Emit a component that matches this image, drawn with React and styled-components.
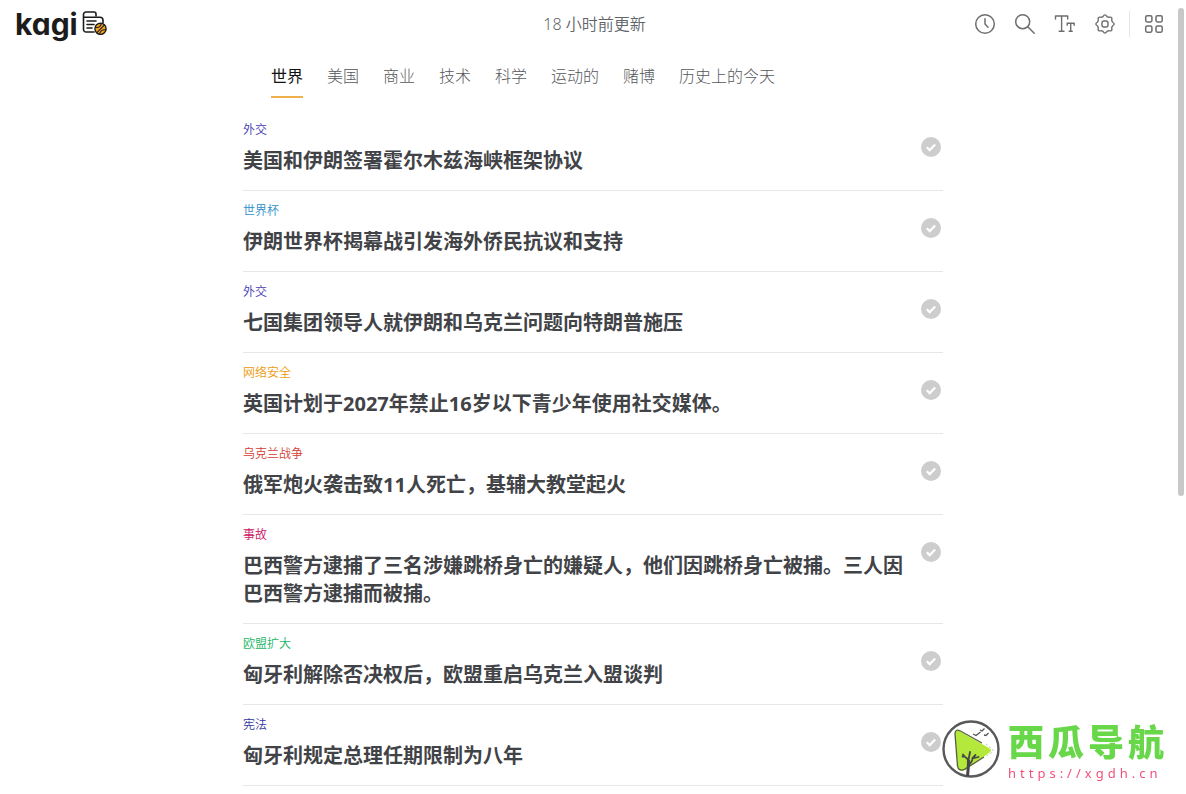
import React, { useState } from 'react'
import styled, { createGlobalStyle } from 'styled-components'

const GlobalStyle = createGlobalStyle`
  * {
    box-sizing: border-box;
  }
  body {
    margin: 0;
    background: #fff;
    color: #3f4145;
    font-family: "Noto Sans", "Noto Sans CJK SC", sans-serif;
  }
  button {
    border: 0;
    padding: 0;
    background: none;
    font: inherit;
    color: inherit;
    cursor: pointer;
  }
`

const Header = styled.header`
  display: grid;
  grid-template-columns: 1fr auto 1fr;
  align-items: center;
  height: 48px;
  padding: 0 12px 0 15px;
`

const Logo = styled.a`
  display: flex;
  align-items: center;
  gap: 4px;
  color: #1c1c1c;
  text-decoration: none;
`

const LogoText = styled.span`
  font-family: Inter, sans-serif;
  font-size: 30px;
  font-weight: 700;
  line-height: 32px;
  font-feature-settings: "cv11" 1;
`

const Updated = styled.div`
  font-size: 16px;
  line-height: 24px;
  font-weight: 350;
  color: #606368;
`

const Tools = styled.div`
  display: flex;
  justify-content: flex-end;
  align-items: center;
`

const IconButton = styled.button`
  display: flex;
  align-items: center;
  justify-content: center;
  width: 40px;
  height: 40px;
  color: #6e6e6e;

  &:hover {
    color: #222;
  }
`

const Divider = styled.span`
  width: 1px;
  height: 26px;
  margin: 0 4px;
  background: #e6e6e6;
`

const Page = styled.main`
  max-width: 700px;
  margin: 0 auto;
`

const Tabs = styled.nav`
  display: flex;
  gap: 24px;
  padding: 16px 28px 12px;
`

const Tab = styled.button`
  padding-bottom: 8px;
  border-bottom: 2px solid ${p => (p.$active ? '#eeb04a' : 'transparent')};
  font-size: 16px;
  line-height: 24px;
  font-weight: ${p => (p.$active ? 400 : 300)};
  color: ${p => (p.$active ? '#111' : '#55585c')};
  white-space: nowrap;
`

const Story = styled.article`
  display: flex;
  justify-content: space-between;
  gap: 16px;
  padding: 12px 2px 15px 0;
  border-bottom: 1px solid #e7e7e7;
`

const Category = styled.div`
  margin-bottom: 9px;
  font-size: 12px;
  line-height: 16px;
  font-weight: 350;
  color: ${p => p.$color};
`

const Title = styled.h2`
  margin: 0;
  font-size: 20px;
  line-height: 28px;
  font-weight: 700;
  color: #414347;
`

const ReadButton = styled.button`
  flex: none;
  width: 20px;
  height: 20px;
  margin-top: 15px;
  color: ${p => (p.$read ? '#eeb04a' : '#cdcdcd')};

  & > svg {
    display: block;
  }
`

const ScrollThumb = styled.div`
  position: fixed;
  top: 8px;
  right: 2px;
  width: 6px;
  height: 62vh;
  max-height: 488px;
  border-radius: 3px;
  background: #c8c8c8;
`

const Badge = styled.a`
  position: fixed;
  right: 18px;
  bottom: 12px;
  display: flex;
  align-items: center;
  gap: 8px;
  text-decoration: none;
`

const BadgeText = styled.div`
  display: flex;
  flex-direction: column;
`

const BadgeName = styled.span`
  font-family: "Noto Sans CJK SC", sans-serif;
  font-size: 36px;
  line-height: 48px;
  letter-spacing: 4px;
  font-weight: 900;
  color: #68d84a;
`

const BadgeUrl = styled.span`
  font-size: 13px;
  line-height: 18px;
  letter-spacing: 4px;
  color: #f0527c;
`

const stroke = {
  fill: 'none',
  stroke: 'currentColor',
  strokeLinecap: 'round',
  strokeLinejoin: 'round',
}

const NewsIcon = () => (
  <svg width="26" height="26" viewBox="0 0 26 26" strokeWidth="1.6" {...stroke}>
    <path d="M14 5V3a2 2 0 0 0-2-2H4a2.500 2.500 0 0 0-2.500 2.500v15A2.500 2.500 0 0 0 4 21h8" />
    <path d="M2 6.200h16a3 3 0 0 1 3 3v2.500" />
    <path d="M5 10h9M5 13.500h7M5 17h5" />
    <circle cx="18.500" cy="17.800" r="5.600" fill="#f2a326" strokeWidth="1.400" />
    <path d="M13.600 16.200c3 .8 5.200-.4 5.600-3.600M17.600 23.200c.2-3.200 3-5 6.200-4.200M14.900 21.600l7.400-7.400" strokeWidth="1.100" />
  </svg>
)

const ClockIcon = () => (
  <svg width="22" height="22" viewBox="0 0 22 22" strokeWidth="1.500" {...stroke}>
    <circle cx="11" cy="11" r="9.300" />
    <path d="M11 5.800V11l3 3.200" />
  </svg>
)

const SearchIcon = () => (
  <svg width="22" height="22" viewBox="0 0 22 22" strokeWidth="1.500" {...stroke}>
    <circle cx="8.700" cy="8.700" r="7" />
    <path d="M13.800 13.800l6.400 6.400" />
  </svg>
)

const TextSizeIcon = () => (
  <svg width="22" height="22" viewBox="0 0 22 22" strokeWidth="1.400" {...stroke}>
    <path d="M1.500 6V3h12.200v3M7.600 3v15.300M5.200 18.300h4.800" />
    <path d="M13.200 12.200v-2h7v2M16.700 10.200v8.100M15.200 18.300h3" />
  </svg>
)

const GearIcon = () => (
  <svg width="22" height="22" viewBox="0 0 22 22" strokeWidth="1.400" {...stroke}>
    <path d="M9 3.600 Q11 .1 13 3.600 L14.700 4.300 Q18.700 3.300 17.700 7.300 L18.400 9 Q21.900 11 18.400 13 L17.700 14.700 Q18.700 18.700 14.700 17.700 L13 18.400 Q11 21.900 9 18.400 L7.300 17.700 Q3.300 18.700 4.300 14.700 L3.600 13 Q.1 11 3.600 9 L4.300 7.300 Q3.300 3.300 7.300 4.300 Z" />
    <rect x="8" y="8" width="6" height="6" rx="2" />
  </svg>
)

const GridIcon = () => (
  <svg width="20" height="20" viewBox="0 0 20 20" strokeWidth="1.500" {...stroke}>
    <rect x="1.700" y="1.700" width="6.200" height="6.200" rx="1.400" />
    <rect x="12" y="1.700" width="6.200" height="6.200" rx="1.400" />
    <rect x="1.700" y="12" width="6.200" height="6.200" rx="1.400" />
    <rect x="12" y="12" width="6.200" height="6.200" rx="1.400" />
  </svg>
)

const CheckIcon = () => (
  <svg width="20" height="20" viewBox="0 0 20 20">
    <circle cx="10" cy="10" r="10" fill="currentColor" />
    <path d="M5.800 10.300l2.900 2.800 5.500-5.700" fill="none" stroke="#fff" strokeWidth="2.200" />
  </svg>
)

const MelonIcon = () => (
  <svg width="58" height="58" viewBox="0 0 58 58">
    <circle cx="29" cy="29" r="27.500" fill="#fff" stroke="#58595b" strokeWidth="2.400" />
    <path d="M13 14q0-5 5-2.600l29 16.600q4 2.600 0 5L23 50q-6 3-7-3z" fill="#b4e83a" />
    <path d="M40 23L18 10.800q-5-2-5 3l2.500 32q1 6 7 3.600L42 37" fill="none" stroke="#55603c" strokeWidth="1.300" />
    <path d="M44 24l5 4q4 2.600 0 5l-6 4" fill="none" stroke="#b9c8a0" strokeWidth="1" strokeDasharray="2 2" />
    <path d="M25.500 56q1-8 1-16" fill="none" stroke="#474747" strokeWidth="3" />
    <path d="M26.500 41q-1-3-4-4.500l-1.500-2M22.500 36.500h-2M26.500 45q4-3 4-7l3-3M30.500 38.500l6-1.500M26.500 40l1.500-8" fill="none" stroke="#474747" strokeWidth="1.800" strokeLinecap="round" />
    <path d="M31 14l3 1.500 4.500-3.500M38 10l2 1 2.500-2.500M42 15l2 .5 2.500-2.500" fill="none" stroke="#555" strokeWidth="1.300" />
  </svg>
)

const tabs = ['世界', '美国', '商业', '技术', '科学', '运动的', '赌博', '历史上的今天']

const stories = [
  { category: '外交', color: '#4338b0', title: '美国和伊朗签署霍尔木兹海峡框架协议' },
  { category: '世界杯', color: '#2e8fca', title: '伊朗世界杯揭幕战引发海外侨民抗议和支持' },
  { category: '外交', color: '#4338b0', title: '七国集团领导人就伊朗和乌克兰问题向特朗普施压' },
  { category: '网络安全', color: '#ee9a0c', title: '英国计划于2027年禁止16岁以下青少年使用社交媒体。' },
  { category: '乌克兰战争', color: '#d23c32', title: '俄军炮火袭击致11人死亡，基辅大教堂起火' },
  { category: '事故', color: '#cc1060', title: '巴西警方逮捕了三名涉嫌跳桥身亡的嫌疑人，他们因跳桥身亡被捕。三人因巴西警方逮捕而被捕。' },
  { category: '欧盟扩大', color: '#20b566', title: '匈牙利解除否决权后，欧盟重启乌克兰入盟谈判' },
  { category: '宪法', color: '#34389c', title: '匈牙利规定总理任期限制为八年' },
]

const App = () => {
  const [active, setActive] = useState(0)
  const [read, setRead] = useState({})

  return (
    <>
      <GlobalStyle />
      <Header>
        <Logo href="#">
          <LogoText>kagi</LogoText>
          <NewsIcon />
        </Logo>
        <Updated>18 小时前更新</Updated>
        <Tools>
          <IconButton aria-label="历史"><ClockIcon /></IconButton>
          <IconButton aria-label="搜索"><SearchIcon /></IconButton>
          <IconButton aria-label="字号"><TextSizeIcon /></IconButton>
          <IconButton aria-label="设置"><GearIcon /></IconButton>
          <Divider />
          <IconButton aria-label="应用"><GridIcon /></IconButton>
        </Tools>
      </Header>
      <Page>
        <Tabs>
          {tabs.map((name, i) => (
            <Tab key={name} $active={i === active} onClick={() => setActive(i)}>{name}</Tab>
          ))}
        </Tabs>
        {stories.map((story, i) => (
          <Story key={story.title}>
            <div>
              <Category $color={story.color}>{story.category}</Category>
              <Title>{story.title}</Title>
            </div>
            <ReadButton
              aria-label="标为已读"
              $read={read[i]}
              onClick={() => setRead({ ...read, [i]: !read[i] })}
            >
              <CheckIcon />
            </ReadButton>
          </Story>
        ))}
      </Page>
      <ScrollThumb />
      <Badge href="https://xgdh.cn">
        <MelonIcon />
        <BadgeText>
          <BadgeName>西瓜导航</BadgeName>
          <BadgeUrl>https://xgdh.cn</BadgeUrl>
        </BadgeText>
      </Badge>
    </>
  )
}

export default App
